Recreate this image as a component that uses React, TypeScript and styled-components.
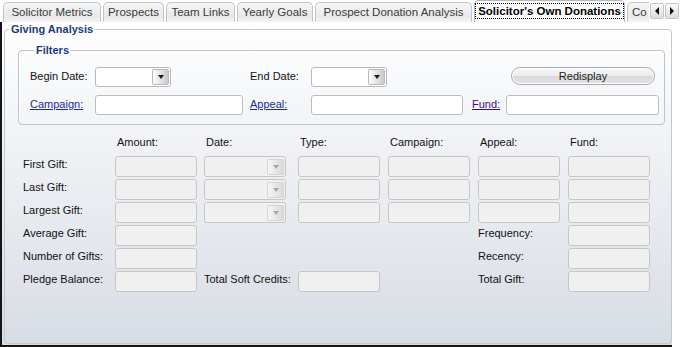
import React from "react";
import styled, { createGlobalStyle } from "styled-components";

const GlobalStyle = createGlobalStyle`
  html, body {
    margin: 0;
    padding: 0;
    background: #ffffff;
  }
  * {
    box-sizing: border-box;
  }
`;

const Frame = styled.div`
  width: 680px;
  height: 347px;
  display: flex;
  flex-direction: column;
  background: #ffffff;
  font-family: "Liberation Sans", Arial, sans-serif;
  font-size: 11px;
  color: #111;
  overflow: hidden;
`;

const TabStrip = styled.div`
  height: 22px;
  display: flex;
  align-items: flex-end;
  padding-left: 3px;
`;

const TabList = styled.div`
  width: 646px;
  height: 22px;
  display: flex;
  align-items: flex-end;
  gap: 2px;
  overflow: hidden;
`;

const Tab = styled.div<{ $w: number; $active?: boolean }>`
  flex: 0 0 ${(p) => p.$w}px;
  height: ${(p) => (p.$active ? 22 : 20)}px;
  display: flex;
  align-items: center;
  justify-content: center;
  border: 1px solid ${(p) => (p.$active ? "#b4b8be" : "#c2c5ca")};
  border-bottom: none;
  border-radius: 5px 5px 0 0;
  background: ${(p) =>
    p.$active ? "#ffffff" : "linear-gradient(#f6f6f6, #e9e9e9 70%, #f4f4f4)"};
  color: ${(p) => (p.$active ? "#000" : "#3a3a3a")};
  font-size: 11.5px;
  font-weight: ${(p) => (p.$active ? "bold" : "normal")};
  white-space: nowrap;
  padding-bottom: 1px;
`;

const FocusText = styled.span`
  outline: 1px dotted #000;
  outline-offset: 1px;
  padding: 0 1px;
`;

const PartialTab = styled(Tab)`
  justify-content: flex-start;
  padding-left: 4px;
`;

const ScrollButtons = styled.div`
  display: flex;
  gap: 1px;
  margin-left: 1px;
  align-self: flex-start;
  margin-top: 3px;
`;

const ScrollButton = styled.div`
  width: 14px;
  height: 16px;
  border: 1px solid #c4c6ca;
  border-radius: 2px;
  background: linear-gradient(#fbfbfb, #dcdcdc);
  display: flex;
  align-items: center;
  justify-content: center;
`;

const Arrow = styled.div<{ $dir: "left" | "right" | "down"; $muted?: boolean }>`
  width: 0;
  height: 0;
  ${(p) =>
    p.$dir === "down"
      ? `border-left: 3.5px solid transparent; border-right: 3.5px solid transparent; border-top: 4px solid ${
          p.$muted ? "#a8a8a8" : "#1a1a1a"
        };`
      : p.$dir === "left"
      ? "border-top: 4px solid transparent; border-bottom: 4px solid transparent; border-right: 4px solid #111;"
      : "border-top: 4px solid transparent; border-bottom: 4px solid transparent; border-left: 4px solid #111;"}
`;

const TabPage = styled.div`
  width: 672px;
  flex: 1;
  display: flex;
  border-left: 2px solid #151515;
  border-bottom: 2px solid #151515;
  background: linear-gradient(#ffffff, #f1f3f6 35%, #d8dce4);
  padding: 0 0 1px 2px;
`;

const GroupBox = styled.fieldset`
  margin: 0;
  padding: 0;
  min-width: 0;
  border: 1px solid #c4c7cc;
  border-radius: 4px;
  display: flex;
  flex-direction: column;
`;

const OuterBox = styled(GroupBox)`
  width: 668px;
  flex: 1;
  margin-top: 1px;
`;

const FilterBox = styled(GroupBox)`
  margin: 8px 6px 0 13px;
  padding: 10px 0 9px 11px;
  border-color: #bfc3c9;
  box-shadow: inset 1px 1px 0 #ffffff;
`;

const GroupTitle = styled.legend`
  margin-left: 4px;
  padding: 0 2px;
  line-height: 13px;
  font-size: 11px;
  font-weight: bold;
  color: #1a3a7a;
`;

const FilterGrid = styled.div`
  display: grid;
  grid-template-columns: 65px 155px 61px 161px 34px 153px;
  grid-auto-rows: 20px;
  row-gap: 8px;
`;

const Label = styled.span`
  padding-top: 3px;
  line-height: 13px;
  white-space: nowrap;
  color: #111;
`;

const LinkLabel = styled.a<{ $visited?: boolean }>`
  padding-top: 3px;
  line-height: 13px;
  white-space: nowrap;
  color: ${(p) => (p.$visited ? "#3b0f7a" : "#1b2a9a")};
  text-decoration: underline;
  cursor: pointer;
`;

const TextInput = styled.div<{ $w: number }>`
  width: ${(p) => p.$w}px;
  height: 20px;
  background: #ffffff;
  border: 1px solid #b9bcc1;
  border-radius: 3px;
`;

const Combo = styled.div<{ $w: number; $disabled?: boolean }>`
  width: ${(p) => p.$w}px;
  height: ${(p) => (p.$disabled ? 21 : 20)}px;
  background: ${(p) => (p.$disabled ? "#f0f0f0" : "#ffffff")};
  border: 1px solid ${(p) => (p.$disabled ? "#c6c6c6" : "#b5b8bd")};
  border-radius: 3px;
  display: flex;
  justify-content: flex-end;
  align-items: center;
  padding-right: 1px;
`;

const DateCell = styled(Combo)`
  grid-column: 3;
`;

const ComboButton = styled.div<{ $disabled?: boolean }>`
  width: 17px;
  height: 16px;
  border: 1px solid ${(p) => (p.$disabled ? "#d6d6d6" : "#b9b9b9")};
  border-radius: 2px;
  background: ${(p) =>
    p.$disabled
      ? "linear-gradient(90deg, #f6f6f6, #d9d9d9)"
      : "linear-gradient(90deg, #ffffff, #c9c9c9)"};
  display: flex;
  align-items: center;
  justify-content: center;
`;

const RedisplayButton = styled.button`
  grid-column: 5 / 7;
  margin-left: 39px;
  width: 144px;
  height: 18px;
  padding: 0;
  border: 1px solid #a9abae;
  border-radius: 9px;
  background: linear-gradient(#f7f7f7, #ececec 50%, #d9d9d9 51%, #e2e2e2);
  font-family: "Liberation Sans", Arial, sans-serif;
  font-size: 11px;
  color: #222;
  box-shadow: inset 0 0 0 1px #ffffff;
`;

const Summary = styled.div`
  display: grid;
  grid-template-columns: 92px 89px 94px 90px 90px 90px 82px;
  grid-template-rows: 18px;
  grid-auto-rows: 21px;
  row-gap: 2px;
  padding: 11px 0 0 18px;
`;

const ColHead = styled.span<{ $col: number }>`
  grid-column: ${(p) => p.$col};
  grid-row: 1;
  padding-left: 2px;
  line-height: 13px;
  color: #111;
`;

const Field = styled.div<{ $col: number }>`
  grid-column: ${(p) => p.$col};
  width: 82px;
  height: 21px;
  background: #f0f0f0;
  border: 1px solid #c6c6c6;
  border-radius: 3px;
`;

const RowLabel = styled.span<{ $col?: number; $span?: number }>`
  grid-column: ${(p) => p.$col || 1} / span ${(p) => p.$span || 1};
  padding-top: 2px;
  line-height: 13px;
  white-space: nowrap;
  color: #111;
`;

const cols = ["Amount:", "Date:", "Type:", "Campaign:", "Appeal:", "Fund:"];

function GiftRow({ label, row }: { label: string; row: number }) {
  return (
    <>
      <RowLabel style={{ gridRow: row }}>{label}</RowLabel>
      <Field $col={2} />
      <DateCell $w={82} $disabled>
        <ComboButton $disabled>
          <Arrow $dir="down" $muted />
        </ComboButton>
      </DateCell>
      <Field $col={4} />
      <Field $col={5} />
      <Field $col={6} />
      <Field $col={7} />
    </>
  );
}

export default function App() {
  return (
    <>
      <GlobalStyle />
      <Frame>
        <TabStrip>
          <TabList>
            <Tab $w={98}>Solicitor Metrics</Tab>
            <Tab $w={61}>Prospects</Tab>
            <Tab $w={69}>Team Links</Tab>
            <Tab $w={76}>Yearly Goals</Tab>
            <Tab $w={157}>Prospect Donation Analysis</Tab>
            <Tab $w={151} $active>
              <FocusText>Solicitor's Own Donations</FocusText>
            </Tab>
            <PartialTab $w={60}>Co</PartialTab>
          </TabList>
          <ScrollButtons>
            <ScrollButton>
              <Arrow $dir="left" />
            </ScrollButton>
            <ScrollButton>
              <Arrow $dir="right" />
            </ScrollButton>
          </ScrollButtons>
        </TabStrip>

        <TabPage>
          <OuterBox>
            <GroupTitle>Giving Analysis</GroupTitle>

            <FilterBox>
              <GroupTitle>Filters</GroupTitle>
              <FilterGrid>
                <Label>Begin Date:</Label>
                <Combo $w={76}>
                  <ComboButton>
                    <Arrow $dir="down" />
                  </ComboButton>
                </Combo>
                <Label>End Date:</Label>
                <Combo $w={76}>
                  <ComboButton>
                    <Arrow $dir="down" />
                  </ComboButton>
                </Combo>
                <RedisplayButton>Redisplay</RedisplayButton>

                <LinkLabel>Campaign:</LinkLabel>
                <TextInput $w={148} />
                <LinkLabel>Appeal:</LinkLabel>
                <TextInput $w={152} />
                <LinkLabel $visited>Fund:</LinkLabel>
                <TextInput $w={153} />
              </FilterGrid>
            </FilterBox>

            <Summary>
              {cols.map((c, i) => (
                <ColHead key={c} $col={i + 2}>
                  {c}
                </ColHead>
              ))}
              <GiftRow label="First Gift:" row={2} />
              <GiftRow label="Last Gift:" row={3} />
              <GiftRow label="Largest Gift:" row={4} />

              <RowLabel>Average Gift:</RowLabel>
              <Field $col={2} />
              <RowLabel $col={6}>Frequency:</RowLabel>
              <Field $col={7} />

              <RowLabel>Number of Gifts:</RowLabel>
              <Field $col={2} />
              <RowLabel $col={6}>Recency:</RowLabel>
              <Field $col={7} />

              <RowLabel>Pledge Balance:</RowLabel>
              <Field $col={2} />
              <RowLabel $col={3}>Total Soft Credits:</RowLabel>
              <Field $col={4} />
              <RowLabel $col={6}>Total Gift:</RowLabel>
              <Field $col={7} />
            </Summary>
          </OuterBox>
        </TabPage>
      </Frame>
    </>
  );
}
